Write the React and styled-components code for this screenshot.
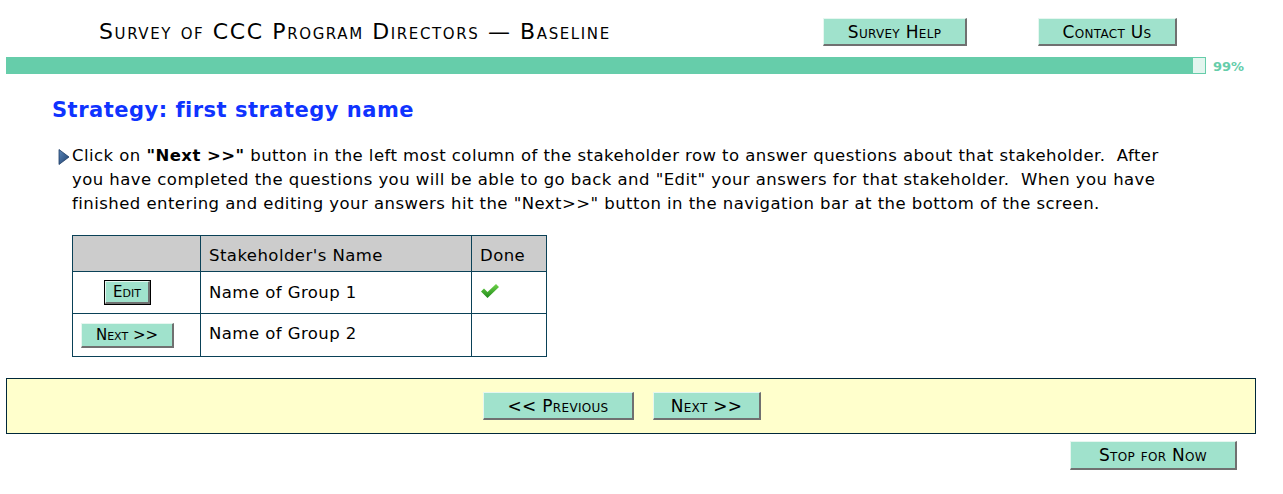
import React from "react";
import styled, { createGlobalStyle } from "styled-components";

const Global = createGlobalStyle`
  html, body { margin: 0; padding: 0; background: #fff; }
  body { font-family: "DejaVu Sans", Verdana, sans-serif; color: #000; }
`;

const Page = styled.div`
  width: 1283px;
  height: 494px;
  overflow: hidden;
`;

const Header = styled.div`
  display: flex;
  align-items: flex-start;
  height: 57px;
  padding: 18px 0 0 99px;
  box-sizing: border-box;
`;

const Title = styled.h1`
  margin: 0;
  width: 724px;
  font-family: "DejaVu Sans", Tahoma, sans-serif;
  font-variant: small-caps;
  font-weight: normal;
  font-size: 22px;
  line-height: 27px;
  letter-spacing: 1.6px;
`;

const Btn = styled.button`
  box-sizing: border-box;
  width: ${(p) => p.$w}px;
  height: ${(p) => p.$h || 28}px;
  margin-left: ${(p) => p.$ml || 0}px;
  background: #a0e2cc;
  border-style: solid;
  border-width: 1px 2px 2px 1px;
  border-color: #e6f7f0 #707070 #707070 #e6f7f0;
  font-family: "DejaVu Sans", Tahoma, sans-serif;
  font-variant: small-caps;
  font-size: ${(p) => p.$fs || 17}px;
  letter-spacing: ${(p) => p.$ls ?? 0.3}px;
  color: #000;
  padding: 0;
  cursor: pointer;
  ${(p) => p.$focus && `outline: 1px solid #000; outline-offset: 0;`}
`;

const ProgressRow = styled.div`
  display: flex;
  align-items: center;
  margin-left: 6px;
  height: 17px;
`;

const Bar = styled.div`
  width: 1187px;
  height: 17px;
  background: #66cdaa;
`;

const Rest = styled.div`
  box-sizing: border-box;
  width: 13px;
  height: 17px;
  background: #e2f5ee;
  border: 1px solid #66cdaa;
  border-left: none;
`;

const Pct = styled.span`
  margin-left: 7px;
  font-weight: bold;
  font-size: 13px;
  color: #66cdaa;
  padding-top: 2px;
`;

const Main = styled.div`
  padding-left: 52px;
`;

const Heading = styled.h2`
  margin: 23px 0 0 0;
  color: #0f33ff;
  font-size: 21px;
  font-weight: bold;
  line-height: 26px;
  letter-spacing: 0.5px;
`;

const Instruction = styled.div`
  display: flex;
  margin-top: 21px;
  margin-left: 6px;
  width: 1110px;
`;

const Arrow = styled.svg`
  flex: none;
  margin-top: 5px;
  margin-right: 2px;
`;

const Para = styled.p`
  margin: 0;
  font-size: 16.5px;
  line-height: 24px;
  letter-spacing: 0.45px;
`;

const Table = styled.table`
  margin: 19px 0 0 20px;
  border-collapse: collapse;
  border: 1px solid #0a4157;
  font-size: 16.5px;
  letter-spacing: 0.45px;
`;

const Th = styled.th`
  background: #cccccc;
  border: 1px solid #0a4157;
  height: 36px;
  padding: 3px 8px 0;
  text-align: left;
  font-weight: normal;
  width: ${(p) => p.$w}px;
  box-sizing: border-box;
`;

const Td = styled.td`
  border: 1px solid #0a4157;
  height: ${(p) => p.$h || 42}px;
  padding: ${(p) => (p.$center ? "0 18px 0 0" : `0 8px ${p.$pb || 0}px`)};
  text-align: ${(p) => (p.$center ? "center" : "left")};
  vertical-align: middle;
  box-sizing: border-box;
`;

const Check = styled.svg`
  display: block;
  margin-top: -4px;
`;

const NavBar = styled.div`
  box-sizing: border-box;
  margin: 21px 0 0 6px;
  width: 1250px;
  height: 56px;
  background: #ffffcc;
  border: 1px solid #00283a;
  display: flex;
  align-items: center;
  padding-left: 476px;
  gap: 19px;
`;

const Footer = styled.div`
  display: flex;
  justify-content: flex-end;
  padding-right: 46px;
  margin-top: 7px;
`;

export default function App() {
  return (
    <Page>
      <Global />
      <Header>
        <Title>Survey of CCC Program Directors — Baseline</Title>
        <Btn $w={144}>Survey Help</Btn>
        <Btn $w={139} $ml={71}>Contact Us</Btn>
      </Header>
      <ProgressRow>
        <Bar />
        <Rest />
        <Pct>99%</Pct>
      </ProgressRow>
      <Main>
        <Heading>Strategy: first strategy name</Heading>
        <Instruction>
          <Arrow width="12" height="16" viewBox="0 0 12 16">
            <defs>
              <linearGradient id="ag" x1="0" y1="0" x2="1" y2="1">
                <stop offset="0" stopColor="#5b86b8" />
                <stop offset="1" stopColor="#1d3f6e" />
              </linearGradient>
            </defs>
            <path d="M1 0.5 L11 8 L1 15.5 Z" fill="url(#ag)" stroke="#1c3a63" strokeWidth="0.8" />
          </Arrow>
          <Para>
            Click on <b>"Next &gt;&gt;"</b> button in the left most column of the stakeholder row to answer questions about that stakeholder.&nbsp; After you have completed the questions you will be able to go back and "Edit" your answers for that stakeholder.&nbsp; When you have finished entering and editing your answers hit the "Next&gt;&gt;" button in the navigation bar at the bottom of the screen.
          </Para>
        </Instruction>
        <Table>
          <thead>
            <tr>
              <Th $w={128}></Th>
              <Th $w={271}>Stakeholder's Name</Th>
              <Th $w={75}>Done</Th>
            </tr>
          </thead>
          <tbody>
            <tr>
              <Td $center>
                <Btn $w={45} $h={23} $fs={15} $ls={0} $focus>Edit</Btn>
              </Td>
              <Td>Name of Group 1</Td>
              <Td>
                <Check width="20" height="16" viewBox="0 0 20 16">
                  <defs>
                    <linearGradient id="cg" x1="0" y1="0" x2="0" y2="1">
                      <stop offset="0" stopColor="#6fd34a" />
                      <stop offset="1" stopColor="#1f8a1a" />
                    </linearGradient>
                  </defs>
                  <path d="M1 8.5 L4 5.5 L7.5 9 L16 1 L19 4 L7.5 15 Z" fill="url(#cg)" />
                </Check>
              </Td>
            </tr>
            <tr>
              <Td $center $h={43}>
                <Btn $w={93} $h={25} $fs={15} $ls={0}>Next &gt;&gt;</Btn>
              </Td>
              <Td $h={43} $pb={4}>Name of Group 2</Td>
              <Td $h={43}></Td>
            </tr>
          </tbody>
        </Table>
      </Main>
      <NavBar>
        <Btn $w={151} $h={28}>&lt;&lt; Previous</Btn>
        <Btn $w={108} $h={28}>Next &gt;&gt;</Btn>
      </NavBar>
      <Footer>
        <Btn $w={167} $h={29}>Stop for Now</Btn>
      </Footer>
    </Page>
  );
}
